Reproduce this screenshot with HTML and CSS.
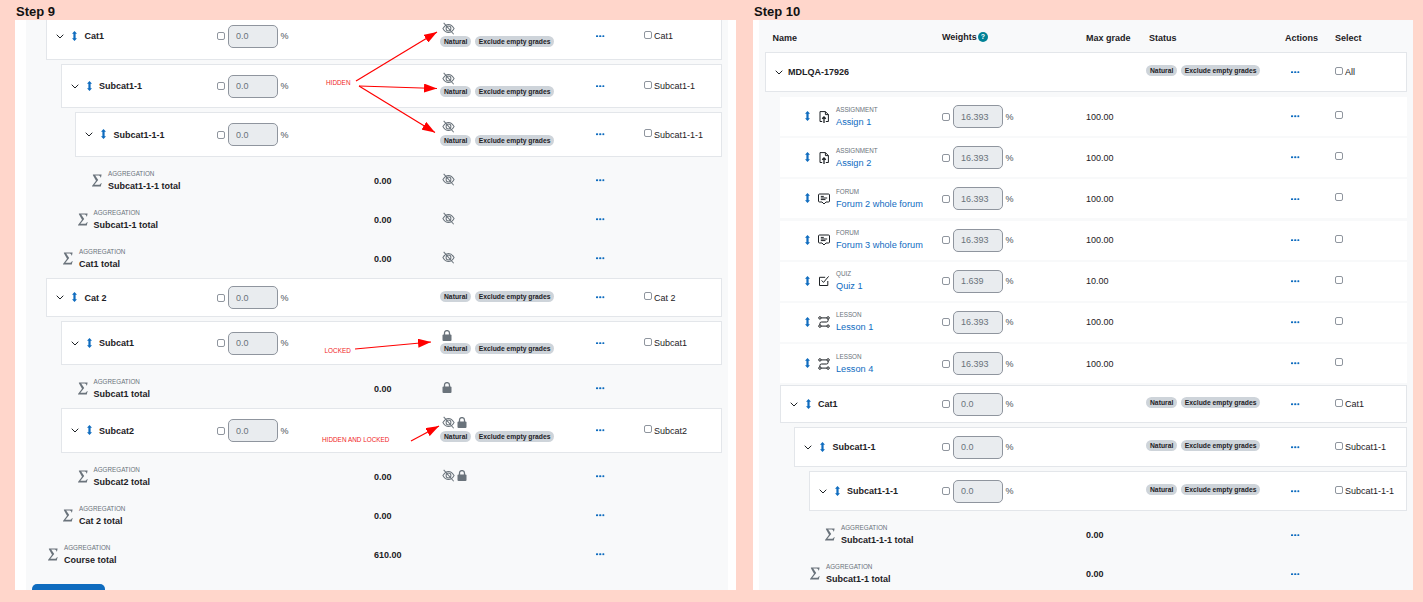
FILE: index.html
```html
<!DOCTYPE html>
<html lang="en">
<head>
  <meta charset="UTF-8" />
  <meta name="viewport" content="width=device-width, initial-scale=1.0"/>
  <title>Gradebook setup steps</title>
  <link rel="stylesheet" href="styles.css">
</head>
<body>
  <svg class="sprite" aria-hidden="true">
    <symbol id="i-chev" viewBox="0 0 8 5"><path d="M.7.7 4 4 7.3.7" fill="none" stroke="currentColor" stroke-width="1"/></symbol>
    <symbol id="i-move" viewBox="0 0 5 10"><path d="M2.5 0 5 2.8H3.6V7.2H5L2.5 10 0 7.2H1.4V2.8H0Z" fill="currentColor"/></symbol>
    <symbol id="i-dots" viewBox="0 0 8.5 2.5"><rect x="0" y=".2" width="2.1" height="2.1" rx=".6" fill="currentColor"/><rect x="3.2" y=".2" width="2.1" height="2.1" rx=".6" fill="currentColor"/><rect x="6.4" y=".2" width="2.1" height="2.1" rx=".6" fill="currentColor"/></symbol>
    <symbol id="i-eye" viewBox="0 0 14 14"><g fill="none" stroke="currentColor" stroke-width="1.1"><path d="M1 7C3 3.6 5 2.6 7 2.6S11 3.6 13 7C11 10.4 9 11.4 7 11.4S3 10.4 1 7Z"/><circle cx="7" cy="7" r="2.6"/><path d="M1.8 1 12.6 13.2"/></g></symbol>
    <symbol id="i-lock" viewBox="0 0 10 11"><rect x=".5" y="4.4" width="9" height="6.6" rx="1" fill="currentColor"/><path d="M2.5 5V3.1a2.5 2.5 0 0 1 5 0V5" fill="none" stroke="currentColor" stroke-width="1.3"/></symbol>
    <symbol id="i-sigma" viewBox="0 0 10 13"><path d="M1 .5H9.6L9 3.6H8.5C8.3 2.1 7.5 1.6 6 1.6H3.2L6.2 6 2.4 10.8H6.5C8 10.8 8.6 10.2 9 9H9.6L8.8 12.5H0V12L4 6.8 .8 1Z" fill="currentColor"/></symbol>
    <symbol id="i-assign" viewBox="0 0 10 12"><g fill="none" stroke="currentColor"><path d="M3.2 10.5H1V.6H6.4L9.4 3.6V10.5H6.8" stroke-width="1"/><path d="M6.4.6V3.6H9.4" stroke-width="1"/><path d="M5 12V6M3.2 7.8 5 6 6.8 7.8" stroke-width="1.3"/></g></symbol>
    <symbol id="i-forum" viewBox="0 0 12 12"><g fill="none" stroke="currentColor" stroke-width="1"><path d="M1.5 1H10.5A1 1 0 0 1 11.5 2V8A1 1 0 0 1 10.5 9H8L6 11 4 9H1.5A1 1 0 0 1 .5 8V2A1 1 0 0 1 1.5 1Z"/><path d="M2.8 3.4H5.8M2.8 5H9.2M2.8 6.6H7.5"/></g></symbol>
    <symbol id="i-quiz" viewBox="0 0 12 12"><path d="M9.8 6V10.5H1.5V2.3H7.2M3.6 5.4 5.5 7.4 10.6 1.4" fill="none" stroke="currentColor" stroke-width="1"/></symbol>
    <symbol id="i-lesson" viewBox="0 0 12 12"><g fill="none" stroke="currentColor" stroke-width="1"><circle cx="1.9" cy="1.9" r="1.2"/><circle cx="10.1" cy="1.9" r="1.2"/><circle cx="1.9" cy="10.1" r="1.2"/><circle cx="10.1" cy="10.1" r="1.2"/><path d="M3.1 1.9H8.9M10.1 3.1V4.4Q10.1 6 8.5 6H3.5Q1.9 6 1.9 7.6V8.9M3.1 10.1H8.9"/></g></symbol>
  </svg>

  <div class="page">
    <section class="step step-9">
      <h2>Step 9</h2>
      <div class="panel">
        <div class="sheet">
          <div class="row card h40 cut">
            <div class="name"><svg class="chev"><use href="#i-chev"/></svg><svg class="move"><use href="#i-move"/></svg><b>Cat1</b></div>
            <div class="wgt"><input type="checkbox" class="cb"><input class="num" value="0.0" disabled> <span>%</span></div>
            <div></div>
            <div class="status"><div class="marks"><svg class="eye"><use href="#i-eye"/></svg></div><div class="tags"><span class="tag">Natural</span><span class="tag">Exclude empty grades</span></div></div>
            <div class="act"><svg class="dots"><use href="#i-dots"/></svg></div>
            <label class="sel"><input type="checkbox" class="cb">Cat1</label>
          </div>
          <div class="row card h44 lvl-1">
            <div class="name"><svg class="chev"><use href="#i-chev"/></svg><svg class="move"><use href="#i-move"/></svg><b>Subcat1-1</b></div>
            <div class="wgt"><input type="checkbox" class="cb"><input class="num" value="0.0" disabled> <span>%</span></div>
            <div></div>
            <div class="status"><div class="marks"><svg class="eye"><use href="#i-eye"/></svg></div><div class="tags"><span class="tag">Natural</span><span class="tag">Exclude empty grades</span></div></div>
            <div class="act"><svg class="dots"><use href="#i-dots"/></svg></div>
            <label class="sel"><input type="checkbox" class="cb">Subcat1-1</label>
          </div>
          <div class="row card h45 lvl-2">
            <div class="name"><svg class="chev"><use href="#i-chev"/></svg><svg class="move"><use href="#i-move"/></svg><b>Subcat1-1-1</b></div>
            <div class="wgt"><input type="checkbox" class="cb"><input class="num" value="0.0" disabled> <span>%</span></div>
            <div></div>
            <div class="status"><div class="marks"><svg class="eye"><use href="#i-eye"/></svg></div><div class="tags"><span class="tag">Natural</span><span class="tag">Exclude empty grades</span></div></div>
            <div class="act"><svg class="dots"><use href="#i-dots"/></svg></div>
            <label class="sel"><input type="checkbox" class="cb">Subcat1-1-1</label>
          </div>
          <div class="row total sum-3">
            <div class="name"><svg class="sigma"><use href="#i-sigma"/></svg><div><small>AGGREGATION</small><b>Subcat1-1-1 total</b></div></div>
            <div></div>
            <div class="max"><b>0.00</b></div>
            <div class="status"><div class="marks"><svg class="eye"><use href="#i-eye"/></svg></div></div>
            <div class="act"><svg class="dots"><use href="#i-dots"/></svg></div>
            <div></div>
          </div>
          <div class="row total sum-2">
            <div class="name"><svg class="sigma"><use href="#i-sigma"/></svg><div><small>AGGREGATION</small><b>Subcat1-1 total</b></div></div>
            <div></div>
            <div class="max"><b>0.00</b></div>
            <div class="status"><div class="marks"><svg class="eye"><use href="#i-eye"/></svg></div></div>
            <div class="act"><svg class="dots"><use href="#i-dots"/></svg></div>
            <div></div>
          </div>
          <div class="row total sum-1">
            <div class="name"><svg class="sigma"><use href="#i-sigma"/></svg><div><small>AGGREGATION</small><b>Cat1 total</b></div></div>
            <div></div>
            <div class="max"><b>0.00</b></div>
            <div class="status"><div class="marks"><svg class="eye"><use href="#i-eye"/></svg></div></div>
            <div class="act"><svg class="dots"><use href="#i-dots"/></svg></div>
            <div></div>
          </div>
          <div class="row card h39">
            <div class="name"><svg class="chev"><use href="#i-chev"/></svg><svg class="move"><use href="#i-move"/></svg><b>Cat 2</b></div>
            <div class="wgt"><input type="checkbox" class="cb"><input class="num" value="0.0" disabled> <span>%</span></div>
            <div></div>
            <div class="status"><div class="tags"><span class="tag">Natural</span><span class="tag">Exclude empty grades</span></div></div>
            <div class="act"><svg class="dots"><use href="#i-dots"/></svg></div>
            <label class="sel"><input type="checkbox" class="cb">Cat 2</label>
          </div>
          <div class="row card h44 lvl-1">
            <div class="name"><svg class="chev"><use href="#i-chev"/></svg><svg class="move"><use href="#i-move"/></svg><b>Subcat1</b></div>
            <div class="wgt"><input type="checkbox" class="cb"><input class="num" value="0.0" disabled> <span>%</span></div>
            <div></div>
            <div class="status"><div class="marks"><svg class="lock"><use href="#i-lock"/></svg></div><div class="tags"><span class="tag">Natural</span><span class="tag">Exclude empty grades</span></div></div>
            <div class="act"><svg class="dots"><use href="#i-dots"/></svg></div>
            <label class="sel"><input type="checkbox" class="cb">Subcat1</label>
          </div>
          <div class="row total sum-2">
            <div class="name"><svg class="sigma"><use href="#i-sigma"/></svg><div><small>AGGREGATION</small><b>Subcat1 total</b></div></div>
            <div></div>
            <div class="max"><b>0.00</b></div>
            <div class="status"><div class="marks"><svg class="lock"><use href="#i-lock"/></svg></div></div>
            <div class="act"><svg class="dots"><use href="#i-dots"/></svg></div>
            <div></div>
          </div>
          <div class="row card h45 lvl-1">
            <div class="name"><svg class="chev"><use href="#i-chev"/></svg><svg class="move"><use href="#i-move"/></svg><b>Subcat2</b></div>
            <div class="wgt"><input type="checkbox" class="cb"><input class="num" value="0.0" disabled> <span>%</span></div>
            <div></div>
            <div class="status"><div class="marks"><svg class="eye"><use href="#i-eye"/></svg><svg class="lock"><use href="#i-lock"/></svg></div><div class="tags"><span class="tag">Natural</span><span class="tag">Exclude empty grades</span></div></div>
            <div class="act"><svg class="dots"><use href="#i-dots"/></svg></div>
            <label class="sel"><input type="checkbox" class="cb">Subcat2</label>
          </div>
          <div class="row total sum-2">
            <div class="name"><svg class="sigma"><use href="#i-sigma"/></svg><div><small>AGGREGATION</small><b>Subcat2 total</b></div></div>
            <div></div>
            <div class="max"><b>0.00</b></div>
            <div class="status"><div class="marks"><svg class="eye"><use href="#i-eye"/></svg><svg class="lock"><use href="#i-lock"/></svg></div></div>
            <div class="act"><svg class="dots"><use href="#i-dots"/></svg></div>
            <div></div>
          </div>
          <div class="row total sum-1">
            <div class="name"><svg class="sigma"><use href="#i-sigma"/></svg><div><small>AGGREGATION</small><b>Cat 2 total</b></div></div>
            <div></div>
            <div class="max"><b>0.00</b></div>
            <div class="status"></div>
            <div class="act"><svg class="dots"><use href="#i-dots"/></svg></div>
            <div></div>
          </div>
          <div class="row total">
            <div class="name"><svg class="sigma"><use href="#i-sigma"/></svg><div><small>AGGREGATION</small><b>Course total</b></div></div>
            <div></div>
            <div class="max"><b>610.00</b></div>
            <div class="status"></div>
            <div class="act"><svg class="dots"><use href="#i-dots"/></svg></div>
            <div></div>
          </div>
          <button class="save" aria-label="Save changes"></button>
        </div>

        <!-- red notes drawn over the screenshot, in page coordinates -->
        <svg class="notes" viewBox="15 20 721 570">
          <defs>
            <marker id="head" markerUnits="userSpaceOnUse" markerWidth="13" markerHeight="9" refX="13" refY="4.5" orient="auto"><path d="M0 0 13 4.5 0 9Z" fill="#f00"/></marker>
          </defs>
          <line x1="356" y1="81" x2="437" y2="32" marker-end="url(#head)"/>
          <line x1="359" y1="86" x2="437" y2="88.5" marker-end="url(#head)"/>
          <line x1="359" y1="86" x2="435" y2="132.5" marker-end="url(#head)"/>
          <line x1="355" y1="349" x2="431" y2="342" marker-end="url(#head)"/>
          <line x1="411" y1="441" x2="439" y2="426" marker-end="url(#head)"/>
          <text x="326" y="84.5">HIDDEN</text>
          <text x="324.5" y="353">LOCKED</text>
          <text x="322" y="441.5">HIDDEN AND LOCKED</text>
        </svg>
      </div>
    </section>

    <section class="step step-10">
      <h2>Step 10</h2>
      <div class="panel">
        <div class="sheet">
          <div class="row head">
            <div class="name">Name</div>
            <div class="wgt-head">Weights<span class="help">?</span></div>
            <div>Max grade</div>
            <div class="status-head">Status</div>
            <div>Actions</div>
            <div>Select</div>
          </div>
          <div class="row card h39 top">
            <div class="name"><svg class="chev"><use href="#i-chev"/></svg><b>MDLQA-17926</b></div>
            <div></div>
            <div></div>
            <div class="status"><div class="tags"><span class="tag">Natural</span><span class="tag">Exclude empty grades</span></div></div>
            <div class="act"><svg class="dots"><use href="#i-dots"/></svg></div>
            <label class="sel"><input type="checkbox" class="cb">All</label>
          </div>

          <div class="row item lvl-1">
            <div class="name"><svg class="move"><use href="#i-move"/></svg><svg class="mod"><use href="#i-assign"/></svg><div><small>ASSIGNMENT</small><a href="#">Assign 1</a></div></div>
            <div class="wgt"><input type="checkbox" class="cb"><input class="num" value="16.393" disabled> <span>%</span></div>
            <div class="max">100.00</div>
            <div></div>
            <div class="act"><svg class="dots"><use href="#i-dots"/></svg></div>
            <label class="sel"><input type="checkbox" class="cb"></label>
          </div>
          <div class="row item lvl-1">
            <div class="name"><svg class="move"><use href="#i-move"/></svg><svg class="mod"><use href="#i-assign"/></svg><div><small>ASSIGNMENT</small><a href="#">Assign 2</a></div></div>
            <div class="wgt"><input type="checkbox" class="cb"><input class="num" value="16.393" disabled> <span>%</span></div>
            <div class="max">100.00</div>
            <div></div>
            <div class="act"><svg class="dots"><use href="#i-dots"/></svg></div>
            <label class="sel"><input type="checkbox" class="cb"></label>
          </div>
          <div class="row item lvl-1">
            <div class="name"><svg class="move"><use href="#i-move"/></svg><svg class="mod"><use href="#i-forum"/></svg><div><small>FORUM</small><a href="#">Forum 2 whole forum</a></div></div>
            <div class="wgt"><input type="checkbox" class="cb"><input class="num" value="16.393" disabled> <span>%</span></div>
            <div class="max">100.00</div>
            <div></div>
            <div class="act"><svg class="dots"><use href="#i-dots"/></svg></div>
            <label class="sel"><input type="checkbox" class="cb"></label>
          </div>
          <div class="row item lvl-1">
            <div class="name"><svg class="move"><use href="#i-move"/></svg><svg class="mod"><use href="#i-forum"/></svg><div><small>FORUM</small><a href="#">Forum 3 whole forum</a></div></div>
            <div class="wgt"><input type="checkbox" class="cb"><input class="num" value="16.393" disabled> <span>%</span></div>
            <div class="max">100.00</div>
            <div></div>
            <div class="act"><svg class="dots"><use href="#i-dots"/></svg></div>
            <label class="sel"><input type="checkbox" class="cb"></label>
          </div>
          <div class="row item lvl-1">
            <div class="name"><svg class="move"><use href="#i-move"/></svg><svg class="mod"><use href="#i-quiz"/></svg><div><small>QUIZ</small><a href="#">Quiz 1</a></div></div>
            <div class="wgt"><input type="checkbox" class="cb"><input class="num" value="1.639" disabled> <span>%</span></div>
            <div class="max">10.00</div>
            <div></div>
            <div class="act"><svg class="dots"><use href="#i-dots"/></svg></div>
            <label class="sel"><input type="checkbox" class="cb"></label>
          </div>
          <div class="row item lvl-1">
            <div class="name"><svg class="move"><use href="#i-move"/></svg><svg class="mod"><use href="#i-lesson"/></svg><div><small>LESSON</small><a href="#">Lesson 1</a></div></div>
            <div class="wgt"><input type="checkbox" class="cb"><input class="num" value="16.393" disabled> <span>%</span></div>
            <div class="max">100.00</div>
            <div></div>
            <div class="act"><svg class="dots"><use href="#i-dots"/></svg></div>
            <label class="sel"><input type="checkbox" class="cb"></label>
          </div>
          <div class="row item lvl-1">
            <div class="name"><svg class="move"><use href="#i-move"/></svg><svg class="mod"><use href="#i-lesson"/></svg><div><small>LESSON</small><a href="#">Lesson 4</a></div></div>
            <div class="wgt"><input type="checkbox" class="cb"><input class="num" value="16.393" disabled> <span>%</span></div>
            <div class="max">100.00</div>
            <div></div>
            <div class="act"><svg class="dots"><use href="#i-dots"/></svg></div>
            <label class="sel"><input type="checkbox" class="cb"></label>
          </div>

          <div class="row card h38 lvl-1">
            <div class="name"><svg class="chev"><use href="#i-chev"/></svg><svg class="move"><use href="#i-move"/></svg><b>Cat1</b></div>
            <div class="wgt"><input type="checkbox" class="cb"><input class="num" value="0.0" disabled> <span>%</span></div>
            <div></div>
            <div class="status"><div class="tags"><span class="tag">Natural</span><span class="tag">Exclude empty grades</span></div></div>
            <div class="act"><svg class="dots"><use href="#i-dots"/></svg></div>
            <label class="sel"><input type="checkbox" class="cb">Cat1</label>
          </div>
          <div class="row card h40 lvl-2">
            <div class="name"><svg class="chev"><use href="#i-chev"/></svg><svg class="move"><use href="#i-move"/></svg><b>Subcat1-1</b></div>
            <div class="wgt"><input type="checkbox" class="cb"><input class="num" value="0.0" disabled> <span>%</span></div>
            <div></div>
            <div class="status"><div class="tags"><span class="tag">Natural</span><span class="tag">Exclude empty grades</span></div></div>
            <div class="act"><svg class="dots"><use href="#i-dots"/></svg></div>
            <label class="sel"><input type="checkbox" class="cb">Subcat1-1</label>
          </div>
          <div class="row card h40 lvl-3">
            <div class="name"><svg class="chev"><use href="#i-chev"/></svg><svg class="move"><use href="#i-move"/></svg><b>Subcat1-1-1</b></div>
            <div class="wgt"><input type="checkbox" class="cb"><input class="num" value="0.0" disabled> <span>%</span></div>
            <div></div>
            <div class="status"><div class="tags"><span class="tag">Natural</span><span class="tag">Exclude empty grades</span></div></div>
            <div class="act"><svg class="dots"><use href="#i-dots"/></svg></div>
            <label class="sel"><input type="checkbox" class="cb">Subcat1-1-1</label>
          </div>
          <div class="row total sum-r2">
            <div class="name"><svg class="sigma"><use href="#i-sigma"/></svg><div><small>AGGREGATION</small><b>Subcat1-1-1 total</b></div></div>
            <div></div>
            <div class="max"><b>0.00</b></div>
            <div></div>
            <div class="act"><svg class="dots"><use href="#i-dots"/></svg></div>
            <div></div>
          </div>
          <div class="row total sum-r1">
            <div class="name"><svg class="sigma"><use href="#i-sigma"/></svg><div><small>AGGREGATION</small><b>Subcat1-1 total</b></div></div>
            <div></div>
            <div class="max"><b>0.00</b></div>
            <div></div>
            <div class="act"><svg class="dots"><use href="#i-dots"/></svg></div>
            <div></div>
          </div>
        </div>
      </div>
    </section>
  </div>
</body>
</html>
```

FILE: styles.css
```css
* {
  box-sizing: border-box;
}
html, body {
  height: 100%;
}
body {
  margin: 0;
  overflow: hidden;
  background: #ffd6cb;
  color: #1d2125;
  font-family: "Liberation Sans", Arial, sans-serif;
  font-size: 9px;
}
.sprite {
  display: none;
}
.page {
  display: flex;
  gap: 17px;
  padding-left: 15px;
}
h2 {
  margin: 0;
  height: 20px;
  padding: 4px 0 0 1px;
  font-size: 13px;
  line-height: 15px;
  font-weight: bold;
  color: #111;
}
.panel {
  position: relative;
  height: 570px;
  overflow: hidden;
  background: #fff;
}
.sheet {
  height: 100%;
  background: #f8f9fa;
}

/* step columns */
.step-9 {
  width: 721px;
}
.step-9 .panel {
  padding: 0 8px 0 11px;
}
.step-9 .sheet {
  padding: 0 6px 0 20px;
  --c-name: 171px;
  --c-wgt: 157px;
  --c-max: 66px;
  --c-stat: 155px;
  --c-act: 49px;
}
.step-10 {
  width: 660px;
}
.step-10 .panel {
  padding-left: 6px;
}
.step-10 .sheet {
  padding: 0 6px;
  --c-name: 177px;
  --c-wgt: 144px;
  --c-max: 60px;
  --c-stat: 139px;
  --c-act: 50px;
}

/* rows share the same columns whatever the indent */
.row {
  --i: 0px;
  --b: 0px;
  display: grid;
  grid-template-columns: calc(var(--c-name) - var(--i) - var(--b)) var(--c-wgt) var(--c-max) var(--c-stat) var(--c-act) 1fr;
  align-items: center;
  margin-left: var(--i);
}
.lvl-1 { --i: 14.5px; }
.lvl-2 { --i: 29px; }
.lvl-3 { --i: 43.5px; }
.sum-1 { --i: 15px; }
.sum-2 { --i: 29.5px; }
.sum-3 { --i: 44px; }
.sum-r1 { --i: 43px; }
.sum-r2 { --i: 58px; }

.card {
  --b: 1px;
  margin-bottom: 4px;
  background: #fff;
  border: 1px solid #e3e6ea;
}
.cut {
  border-top: 0;
  padding-bottom: 7px;
}
.top {
  margin-bottom: 5px;
  border-top: 0;
}
.h38 { height: 38px; }
.h39 { height: 39px; }
.h40 { height: 40px; }
.h44 { height: 44px; }
.h45 { height: 45px; }
.item {
  height: 39px;
  margin-bottom: 2.2px;
  background: #fff;
}
.total {
  height: 39px;
}
.head {
  height: 33px;
  border-bottom: 1px solid #e3e6ea;
  font-weight: bold;
  padding-top: 4px;
}
.head .name {
  padding-left: 7.5px;
}
.wgt-head {
  display: flex;
  align-items: center;
  gap: 1px;
  margin-top: -3px;
}
.status-head {
  padding-left: 3px;
}
.help {
  width: 10px;
  height: 10px;
  border-radius: 50%;
  background: #008196;
  color: #fff;
  font-size: 7px;
  line-height: 10px;
  text-align: center;
}

/* name column */
.name {
  display: flex;
  align-items: center;
  padding-left: 9px;
  min-width: 0;
  white-space: nowrap;
}
.chev {
  width: 8px;
  height: 5px;
  margin-right: 8px;
  color: #1d2125;
  flex: none;
}
.top .chev {
  margin-right: 5px;
}
.move {
  width: 5px;
  height: 10px;
  margin: -1px 7.5px 0 0;
  color: #0f6cbf;
  flex: none;
}
.item .name {
  padding-left: 25px;
}
.item .move {
  margin-right: 8px;
}
.mod {
  width: 12px;
  height: 12px;
  margin-right: 6.5px;
  color: #1d2125;
  flex: none;
}
.name small {
  display: block;
  font-size: 6.3px;
  line-height: 8px;
  color: #6a737b;
}
.name a {
  display: block;
  margin-top: 2px;
  line-height: 12px;
  font-size: 9.2px;
  color: #0f6cbf;
  text-decoration: none;
}
.total .name {
  padding-left: 2px;
}
.total .name b {
  display: block;
  margin-top: 3px;
  line-height: 11px;
}
.sigma {
  width: 10px;
  height: 13px;
  margin-right: 6px;
  color: #6a737b;
  flex: none;
}

/* weights */
.wgt {
  display: flex;
  align-items: center;
  color: #495057;
}
.cb {
  appearance: none;
  width: 8px;
  height: 8px;
  margin: 0 3px 0 0;
  flex: none;
  background: #fff;
  border: 1px solid #8f959e;
  border-radius: 2px;
}
.num {
  width: 50px;
  height: 23px;
  padding: 0 7px;
  margin-right: 2.5px;
  background: #e9ecef;
  border: 1px solid #8f959e;
  border-radius: 5px;
  color: #6a737b;
  font-family: inherit;
  font-size: 9px;
}

/* status */
.status {
  padding-bottom: 3px;
}
.marks {
  display: flex;
  align-items: center;
  gap: 2px;
  height: 12px;
  margin: 0 0 2px 2px;
  color: #6a737b;
}
.eye {
  width: 13px;
  height: 13px;
}
.lock {
  width: 10px;
  height: 11px;
}
.total .status {
  padding-bottom: 0;
}
.tags {
  display: flex;
  gap: 3.5px;
}
.tag {
  height: 11px;
  padding: 0 4px;
  border-radius: 6px;
  background: #ced4da;
  color: #1d2125;
  font-size: 6.75px;
  font-weight: bold;
  line-height: 11px;
  white-space: nowrap;
}

/* actions and select */
.dots {
  display: block;
  width: 8.5px;
  height: 2.5px;
  margin-left: 1px;
  color: #0f6cbf;
}
.step-10 .dots {
  margin-left: 6px;
}
.sel {
  display: flex;
  align-items: center;
  white-space: nowrap;
}
.sel .cb {
  margin: -3px 2px 0 0;
}
.save {
  display: block;
  width: 73px;
  height: 30px;
  margin: 10px 0 0 -14px;
  border: 0;
  border-radius: 5px;
  background: #0f6cbf;
}

/* annotation layer */
.notes {
  position: absolute;
  top: 0;
  left: 0;
  width: 721px;
  height: 570px;
  pointer-events: none;
}
.notes line {
  stroke: #f00;
  stroke-width: 1.2;
}
.notes text {
  fill: #f01c1c;
  font-size: 6.4px;
}
```
